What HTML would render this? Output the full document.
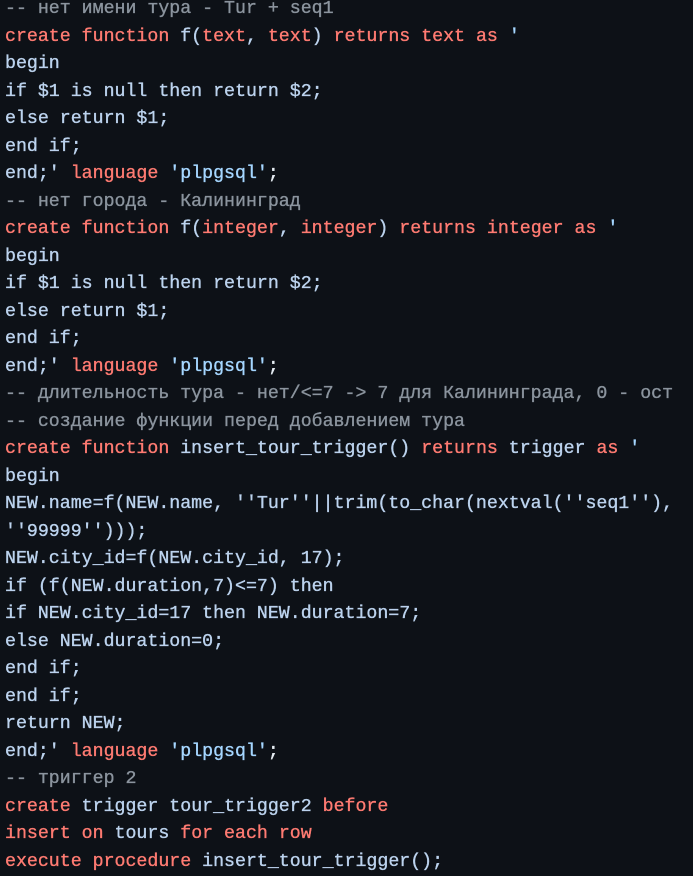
<!DOCTYPE html>
<html><head><meta charset="utf-8"><style>
html,body{margin:0;padding:0;background:#0d1117;width:693px;height:873px;overflow:hidden}
pre{margin:0;padding:0 0 0 5px;position:absolute;top:-4px;left:0;font-family:"Liberation Mono","DejaVu Sans Mono",monospace;font-size:18.25px;line-height:27.5px;color:#bcd3ee;white-space:pre;-webkit-text-stroke:0.35px currentColor}
.k{color:#ff7b72}.c{color:#8b949e}.s{color:#a5d6ff}.w{color:#e6edf3}
</style></head><body><pre><span class="c">-- нет имени тура - Tur + seq1</span>
<span class="k">create function</span> f(<span class="k">text</span>, <span class="k">text</span>) <span class="k">returns text as</span> <span class="s">'</span>
begin
if $1 is null then return $2;
else return $1;
end if;
end;' <span class="k">language</span> <span class="s">'plpgsql'</span><span class="w">;</span>
<span class="c">-- нет города - Калининград</span>
<span class="k">create function</span> f(<span class="k">integer</span>, <span class="k">integer</span>) <span class="k">returns integer as</span> <span class="s">'</span>
begin
if $1 is null then return $2;
else return $1;
end if;
end;' <span class="k">language</span> <span class="s">'plpgsql'</span><span class="w">;</span>
<span class="c">-- длительность тура - нет/&lt;=7 -&gt; 7 для Калининграда, 0 - ост</span>
<span class="c">-- создание функции перед добавлением тура</span>
<span class="k">create function</span> insert_tour_trigger() <span class="k">returns</span> trigger <span class="k">as</span> <span class="s">'</span>
begin
NEW.name=f(NEW.name, ''Tur''||trim(to_char(nextval(''seq1''),
''99999'')));
NEW.city_id=f(NEW.city_id, 17);
if (f(NEW.duration,7)&lt;=7) then
if NEW.city_id=17 then NEW.duration=7;
else NEW.duration=0;
end if;
end if;
return NEW;
end;' <span class="k">language</span> <span class="s">'plpgsql'</span><span class="w">;</span>
<span class="c">-- триггер 2</span>
<span class="k">create</span> trigger tour_trigger2 <span class="k">before</span>
<span class="k">insert on</span> tours <span class="k">for each row</span>
<span class="k">execute procedure</span> insert_tour_trigger();</pre></body></html>
